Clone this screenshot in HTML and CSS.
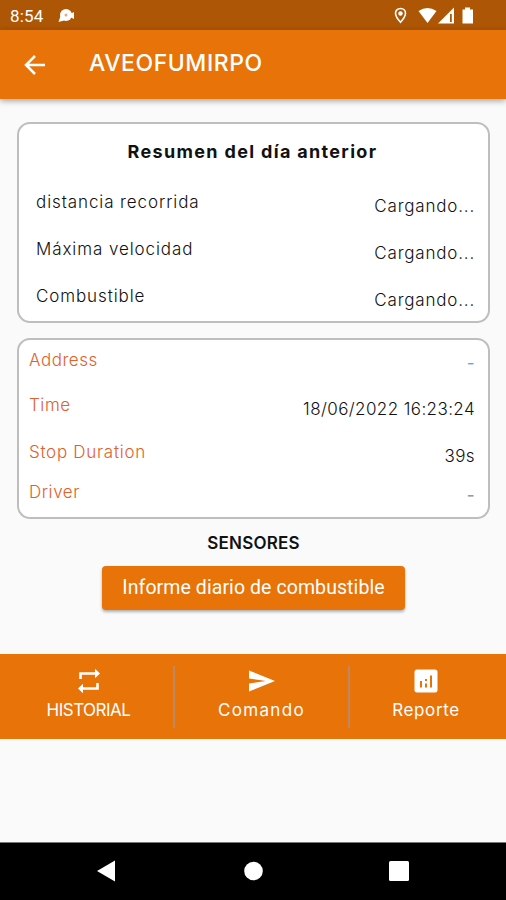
FILE: index.html
```html
<!DOCTYPE html>
<html lang="es">
<head>
<meta charset="utf-8">
<title>AVEOFUMIRPO</title>
<link rel="stylesheet" href="styles.css">
</head>
<body>
<div class="status">
  <span class="clock">8:54</span>
  <svg width="18" height="16" viewBox="0 0 18 16"><circle cx="8" cy="7" r="6" fill="#fff"/><path d="M2.500 8L.5 14L6 12.500ZM12 6L16 4V11L12 9Z" fill="#fff"/><circle cx="8" cy="7" r="1.500" fill="#d9ad8b"/></svg>
  <svg class="sys" width="82" height="18" viewBox="0 0 82 18"><path d="M7.500 1.500C4.400 1.500 2.500 3.700 2.500 6.300C2.500 9.800 7.500 15.300 7.500 15.300S12.500 9.800 12.500 6.300C12.500 3.700 10.600 1.500 7.500 1.500Z" fill="none" stroke="#fff" stroke-width="1.600"/><circle cx="7.500" cy="6.500" r="2.200" fill="#fff"/><path d="M25.500 4Q34.500-2 43.500 4L34.500 16Z" fill="#fff"/><path d="M45 16.500L61 .5V16.500Z" fill="#fff"/><path d="M57 7H58.800V15H57Z" fill="#ad5605"/><path d="M69.500 2.500H72V.5H77V2.500H80V16.500H69.500Z" fill="#fff"/></svg>
</div>
<header class="bar">
  <svg width="22" height="20" viewBox="0 0 22 20"><path d="M21 10H3M11 1L2 10L11 19" fill="none" stroke="#fff" stroke-width="2.500"/></svg>
  <h1>AVEOFUMIRPO</h1>
</header>
<main>
  <section class="card summary">
    <h2>Resumen del día anterior</h2>
    <div class="row"><span class="label">distancia recorrida</span><span class="val">Cargando...</span></div>
    <div class="row"><span class="label">Máxima velocidad</span><span class="val">Cargando...</span></div>
    <div class="row"><span class="label">Combustible</span><span class="val">Cargando...</span></div>
  </section>
  <section class="card detail">
    <div class="row address"><span class="label">Address</span><span class="val link">-</span></div>
    <div class="row time"><span class="label">Time</span><span class="val">18/06/2022 16:23:24</span></div>
    <div class="row stop"><span class="label wide">Stop Duration</span><span class="val">39s</span></div>
    <div class="row driver"><span class="label">Driver</span><span class="val dash">-</span></div>
  </section>
  <h3>SENSORES</h3>
  <button class="report">Informe diario de combustible</button>
</main>
<nav class="actions">
  <a class="action history"><svg width="24" height="26" viewBox="0 0 24 26"><path d="M3.500 11V5.500H19M20.500 15V20.500H5" fill="none" stroke="#fff" stroke-width="2.600"/><path d="M18 .8L23 5.500L18 10.200ZM6 15.800L1 20.500L6 25.200Z" fill="#fff"/></svg><span>HISTORIAL</span></a>
  <a class="action command"><svg width="28" height="26" viewBox="0 0 28 26"><path d="M1 2.500L27 13L1 23.500V15.500L18 13L1 10.500Z" fill="#fff"/></svg><span>Comando</span></a>
  <a class="action reports"><svg width="24" height="26" viewBox="0 0 24 26"><rect x=".5" y="1.500" width="23" height="23" rx="2.500" fill="#fff"/><path d="M6 13H8V19.500H6ZM11 11H13V13H11ZM11 15.500H13V19.500H11ZM16 7.500H18V19.500H16Z" fill="#e87309"/></svg><span>Reporte</span></a>
</nav>
<footer class="system">
  <svg width="20" height="22" viewBox="0 0 20 22"><path d="M1 11L19 .5V21.500Z" fill="#fff"/></svg>
  <svg width="20" height="20" viewBox="0 0 20 20"><circle cx="10.500" cy="10" r="9.300" fill="#fff"/></svg>
  <svg width="20" height="20" viewBox="0 0 20 20"><rect width="20" height="20" rx="1.500" fill="#fff"/></svg>
</footer>
</body>
</html>
```
FILE: styles.css
```css
* { box-sizing: border-box; }
body { margin: 0; height: 900px; display: flex; flex-direction: column; background: #fafafa; font: 300 17px/24px Inter, sans-serif; color: #111; overflow: hidden; }
body > * { flex: none; }
h1, h2, h3 { margin: 0; }
svg { display: block; flex: none; }

.status { height: 30px; background: #ad5605; display: flex; align-items: center; padding: 2px 31px 0 10px; color: #fff; }
.clock { font: 400 17px/20px Roboto, sans-serif; letter-spacing: .2px; width: 48px; }
.sys { margin-left: auto; }

.bar { height: 69px; background: #e87309; display: flex; align-items: center; padding-left: 24px; gap: 43px; color: #fff; box-shadow: 0 2px 6px rgba(0,0,0,.35); }
.bar svg { margin-top: 1px; }
h1 { font: 500 23px/30px Inter, sans-serif; letter-spacing: .55px; margin-top: -3px; }

main { height: 555px; padding: 23px 16px 0 17px; display: flex; flex-direction: column; }
.card { background: #fff; border: 2px solid #bebebe; border-radius: 13px; }
.summary { height: 201px; padding: 15px 13px 0 17px; }
h2 { font-size: 18px; font-weight: 700; line-height: 26px; text-align: center; letter-spacing: 1.33px; margin: 0 3px 25px 0; }
.summary h2 { margin-left: -3px; }
.row { display: flex; justify-content: space-between; height: 47px; }
.label { letter-spacing: .9px; }
.val { padding-top: 4px; letter-spacing: .8px; margin-right: 0; }

.detail { height: 181px; margin-top: 15px; padding: 8px 13px 0 10px; }
.detail .label { color: #e2602a; letter-spacing: .55px; }
.detail .wide { letter-spacing: .72px; }
.detail .val { letter-spacing: .4px; }
.address { height: 45px; }
.stop { height: 41px; }
.detail .link { font-weight: 400; color: #64a4e8; padding-top: 3px; }
.detail .dash { font-weight: 500; color: #999; padding-top: 2px; }
.driver .label { margin-top: -1px; }

h3 { font-size: 17px; font-weight: 600; line-height: 24px; letter-spacing: .2px; text-align: center; margin-top: 12px; }
.report { align-self: center; width: 303px; height: 44px; margin-top: 11px; padding: 0; border: 0; border-radius: 4px; background: #e87309; color: #fff; font: 400 19.500px/44px Roboto, sans-serif; letter-spacing: .08px; box-shadow: 0 2px 3px rgba(0,0,0,.3); }

.actions { height: 85px; background: #e87309; display: grid; grid-template-columns: 175px 175px 156px; align-items: start; padding-top: 12px; color: #fff; font-weight: 400; }
.action { height: 62px; display: flex; flex-direction: column; align-items: center; padding-top: 2px; line-height: 24px; }
.action span { margin-top: 4px; }
.history, .command { border-right: 2px solid #bd8862; }
.history { letter-spacing: -.5px; padding-left: 4px; }
.command { letter-spacing: 1.300px; }
.reports { letter-spacing: .65px; padding-right: 4px; }

.system { height: 58px; margin-top: auto; background: #000; display: flex; align-items: center; justify-content: space-between; padding: 0 97px 2px 96px; border-top: 1px solid #777; }
```
